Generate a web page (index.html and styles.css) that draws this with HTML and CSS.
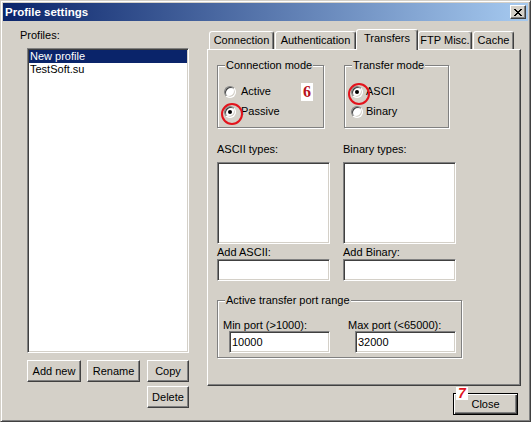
FILE: index.html
```html
<!DOCTYPE html>
<html>
<head>
<meta charset="utf-8">
<title>Profile settings</title>
<link rel="stylesheet" href="styles.css">
</head>
<body>
<div class="window">
  <div class="titlebar">
    <span class="title">Profile settings</span>
    <span class="caption-btn">
      <svg width="8" height="7" viewBox="0 0 8 7" shape-rendering="crispEdges"><path fill="#000" d="M0 0h2v1H0z M6 0h2v1H6z M1 1h2v1H1z M5 1h2v1H5z M2 2h4v1H2z M3 3h2v1H3z M2 4h4v1H2z M1 5h2v1H1z M5 5h2v1H5z M0 6h2v1H0z M6 6h2v1H6z"/></svg>
    </span>
  </div>
  <div class="main">
    <div class="left">
      <div class="lbl profiles-lbl">Profiles:</div>
      <div class="sunken profiles">
        <div class="item sel">New profile</div>
        <div class="item">TestSoft.su</div>
      </div>
      <div class="btnrow">
        <button class="btn w-add">Add new</button>
        <button class="btn w-ren">Rename</button>
        <button class="btn w-copy">Copy</button>
      </div>
      <div class="btnrow end">
        <button class="btn w-del">Delete</button>
      </div>
    </div>
    <div class="right">
      <div class="tabs">
        <div class="tab t-conn">Connection</div>
        <div class="tab t-auth">Authentication</div>
        <div class="tab t-trans active">Transfers</div>
        <div class="tab t-ftp">FTP Misc.</div>
        <div class="tab t-cache">Cache</div>
      </div>
      <div class="panel">
        <div class="row-groups">
          <div class="group g-conn">
            <div class="gtitle">Connection mode</div>
            <div class="opts">
              <div class="opt"><span class="radio gap5"></span>Active</div>
              <div class="opt"><span class="radio gap5 on mark"></span>Passive</div>
            </div>
            <span class="badge6">6</span>
          </div>
          <div class="group g-trans">
            <div class="gtitle">Transfer mode</div>
            <div class="opts">
              <div class="opt"><span class="radio gap3 on mark"></span>ASCII</div>
              <div class="opt"><span class="radio gap3"></span>Binary</div>
            </div>
          </div>
        </div>
        <div class="types">
          <div class="lbl">ASCII types:</div>
          <div class="lbl">Binary types:</div>
          <div class="sunken typelist"></div>
          <div class="sunken typelist"></div>
          <div class="lbl add-lbl">Add ASCII:</div>
          <div class="lbl add-lbl">Add Binary:</div>
          <input class="sunken field" type="text" value="">
          <input class="sunken field" type="text" value="">
        </div>
        <div class="group g-port">
          <div class="gtitle">Active transfer port range</div>
          <div class="port-grid">
            <div class="lbl port-lbl">Min port (&gt;1000):</div>
            <div class="lbl port-lbl">Max port (&lt;65000):</div>
            <input class="sunken field port-in p1" type="text" value="10000">
            <input class="sunken field port-in p2" type="text" value="32000">
          </div>
        </div>
      </div>
      <div class="footer">
        <button class="btn default">Close<span class="badge7">7</span></button>
      </div>
    </div>
  </div>
</div>
</body>
</html>
```

FILE: styles.css
```css
* { box-sizing: border-box; }
html, body { margin: 0; padding: 0; }
body {
  width: 531px;
  height: 422px;
  overflow: hidden;
  background: #D4D0C8;
  font-family: "Liberation Sans", Arial, sans-serif;
  font-size: 11px;
  color: #000;
}
.window {
  width: 531px;
  height: 422px;
  border: 1px solid;
  border-color: #D4D0C8 #404040 #404040 #D4D0C8;
  box-shadow: inset 1px 1px #fff, inset -1px -1px #808080;
  padding: 2px;
  background: #D4D0C8;
  display: flex;
  flex-direction: column;
}
.titlebar {
  height: 18px;
  flex: none;
  display: flex;
  align-items: center;
  justify-content: space-between;
  padding: 0 2px;
  background: linear-gradient(to right, #0A246A, #A6CAF0);
}
.title {
  color: #fff;
  font-weight: bold;
  font-size: 11.5px;
  line-height: 18px;
  white-space: nowrap;
}
.caption-btn {
  width: 16px;
  height: 14px;
  display: flex;
  align-items: center;
  justify-content: center;
  background: #D4D0C8;
  border: 1px solid;
  border-color: #fff #404040 #404040 #fff;
  box-shadow: inset -1px -1px #808080;
}
.caption-btn svg { display: block; }

.main { display: flex; flex: 1; }
.left {
  width: 169px;
  margin-left: 17px;
  display: flex;
  flex-direction: column;
}
.lbl { line-height: 13px; white-space: nowrap; }
.profiles-lbl { margin-top: 8px; }
.sunken {
  background: #fff;
  border: 1px solid;
  border-color: #808080 #fff #fff #808080;
  box-shadow: inset 1px 1px #404040, inset -1px -1px #D4D0C8;
}
.profiles {
  margin: 6px 0 0 7px;
  width: 162px;
  height: 305px;
  padding: 1px;
}
.item { line-height: 13px; padding-left: 1px; white-space: nowrap; }
.item.sel { background: #0A246A; color: #fff; }

.btn {
  height: 22px;
  margin: 0;
  padding: 0;
  font-family: inherit;
  font-size: 11px;
  line-height: 20px;
  color: #000;
  background: #D4D0C8;
  border: 1px solid;
  border-color: #fff #404040 #404040 #fff;
  box-shadow: inset -1px -1px #808080;
  text-align: center;
  white-space: nowrap;
}
.btnrow { display: flex; margin: 7px 0 0 7px; }
.btnrow.end { justify-content: flex-end; margin-top: 4px; }
.w-add { width: 54px; }
.w-ren { width: 53px; margin-left: 6px; }
.w-copy { width: 42px; margin-left: 7px; }
.w-del { width: 42px; }

.right {
  width: 314px;
  margin-left: 18px;
  display: flex;
  flex-direction: column;
}
.tabs {
  margin-top: 8px;
  height: 20px;
  display: flex;
  align-items: flex-end;
  padding-left: 2px;
}
.tab {
  height: 18px;
  border: 1px solid;
  border-bottom: none;
  border-color: #fff #404040 transparent #fff;
  box-shadow: inset -1px 0 #808080;
  border-radius: 3px 3px 0 0;
  text-align: center;
  line-height: 16px;
  white-space: nowrap;
  background: #D4D0C8;
}
.tab.active {
  height: 21px;
  margin-bottom: -1px;
  padding-top: 0;
  line-height: 17px;
  position: relative;
  z-index: 1;
}
.t-conn { width: 65px; margin-right: 1px; }
.t-auth { width: 81px; }
.t-trans { width: 62px; }
.t-ftp { width: 54px; margin-right: 1px; }
.t-cache { width: 41px; }

.panel {
  height: 337px;
  border: 1px solid;
  border-color: #fff #404040 #404040 #fff;
  box-shadow: inset -1px -1px #808080;
  padding: 15px 0 0 9px;
}
.row-groups { display: flex; gap: 20px; }
.group {
  border: 1px solid #808080;
  box-shadow: inset 1px 1px #fff, 1px 1px #fff;
  position: relative;
}
.g-conn { width: 107px; height: 63px; }
.g-trans { width: 105px; height: 63px; }
.gtitle {
  margin: -7px 0 0 7px;
  padding: 0 1px;
  line-height: 13px;
  background: #D4D0C8;
  width: max-content;
  white-space: nowrap;
}
.opts { margin-top: 13px; padding-left: 6px; }
.opt {
  display: flex;
  align-items: center;
  height: 13px;
  line-height: 13px;
  white-space: nowrap;
}
.opt + .opt { margin-top: 7px; }
.radio {
  width: 12px;
  height: 12px;
  flex: none;
  position: relative;
  border-radius: 50%;
  background: #fff;
  border: 1px solid;
  border-color: #808080 #fff #fff #808080;
  box-shadow: inset 1px 1px #404040, inset -1px -1px #D4D0C8;
}
.gap5 { margin-right: 5px; }
.gap3 { margin-right: 3px; }
.radio.on::after {
  content: "";
  position: absolute;
  left: 3px;
  top: 3px;
  width: 4px;
  height: 4px;
  border-radius: 50%;
  background: #000;
}
.radio.mark::before {
  content: "";
  position: absolute;
  left: -4px;
  top: -4px;
  width: 18px;
  height: 18px;
  border: 2px solid #E3131C;
  border-radius: 50%;
}
.badge6 {
  position: absolute;
  left: 83px;
  top: 17px;
  width: 12px;
  height: 18px;
  background: #fff;
  color: #B8121B;
  font-family: "Liberation Serif", serif;
  font-weight: bold;
  font-size: 16px;
  line-height: 18px;
  text-align: center;
}

.types {
  display: grid;
  grid-template-columns: 113px 113px;
  column-gap: 13px;
  margin-top: 15px;
}
.typelist { height: 82px; margin-top: 6px; }
.add-lbl { margin-top: 2px; }
.field {
  height: 22px;
  width: 100%;
  margin: 0;
  padding: 0 2px;
  font-family: inherit;
  font-size: 11px;
  line-height: 20px;
  color: #000;
  outline: none;
  border-radius: 0;
}
.g-port { width: 245px; margin-top: 19px; padding-bottom: 4px; }
.port-grid {
  display: grid;
  grid-template-columns: 125px 113px;
  margin-top: 12px;
  padding-left: 5px;
}
.port-lbl { line-height: 12px; }
.port-in { width: 101px; }
.p1 { margin-left: 6px; }
.p2 { margin-left: 7px; }

.footer {
  display: flex;
  justify-content: flex-end;
  margin-top: 7px;
  padding-right: 3px;
}
.btn.default {
  width: 65px;
  position: relative;
  border: 1px solid #000;
  box-shadow: inset 1px 1px #fff, inset -1px -1px #404040, inset -2px -2px #808080;
}
.badge7 {
  position: absolute;
  left: 2px;
  top: -7px;
  width: 12px;
  height: 13px;
  background: #fff;
  color: #E0141E;
  font-family: "Liberation Sans", Arial, sans-serif;
  font-weight: bold;
  font-style: italic;
  font-size: 14px;
  line-height: 13px;
  text-align: center;
}
```
